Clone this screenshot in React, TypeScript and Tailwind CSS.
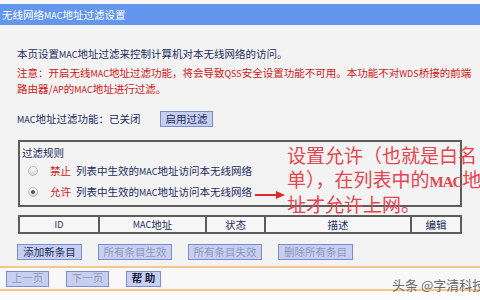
const cols = [
  { label: "ID", w: "w-[78px]" },
  { label: "MAC地址", w: "w-[107px]" },
  { label: "状态", w: "w-[59px]" },
  { label: "描述", w: "w-[146px]" },
  { label: "编辑", w: "flex-1" },
];

// latin letters in the old router page are narrow bitmap glyphs
function L({ children }: { children: React.ReactNode }) {
  return <span className="text-[9px]">{children}</span>;
}

function Btn({ children, off, w }: { children: React.ReactNode; off?: boolean; w: string }) {
  return (
    <div
      className={`${w} h-[16px] flex items-center justify-center bg-[#c7cff0] border border-[#7d8cc8] text-[10.5px] leading-none ${
        off ? "text-[#8f98bd]" : "text-[#1c2c60]"
      }`}
    >
      {children}
    </div>
  );
}

function Radio({ on }: { on?: boolean }) {
  return (
    <span className="w-[10px] h-[10px] rounded-full border border-[#b8b8b8] bg-gradient-to-b from-white to-[#d6d6d6] flex items-center justify-center">
      {on && <span className="w-[4px] h-[4px] rounded-full bg-[#555]" />}
    </span>
  );
}

export default function App() {
  return (
    <div className="relative w-[480px] h-[300px] overflow-hidden bg-[#f3f3f3] font-['Noto_Sans_CJK_SC',sans-serif]">
      <div className="h-[4px] bg-[#f7f7f7]" />
      <div className="h-[21px] bg-[#6496ee] text-white text-[10.5px] leading-[21px] pl-[2px]">
        无线网络<L>MAC</L>地址过滤设置
      </div>

      <div className="pl-[17px] pt-[21px] text-[10.5px] leading-[15px]">
        <p className="text-[#1c2c60]">
          本页设置<L>MAC</L>地址过滤来控制计算机对本无线网络的访问。
        </p>
        <p className="mt-[3px] text-[#d01818] whitespace-nowrap">
          注意：开启无线<L>MAC</L>地址过滤功能，将会导致<L>QSS</L>安全设置功能不可用。本功能不对<L>WDS</L>桥接的前端
          <br />
          路由器/<L>AP</L>的<L>MAC</L>地址进行过滤。
        </p>

        <div className="mt-[14px] flex items-center h-[16px] text-[#1c2c60]">
          <span className="w-[143px]">
            <L>MAC</L>地址过滤功能：已关闭
          </span>
          <Btn w="w-[53px]">启用过滤</Btn>
        </div>
      </div>

      <div className="ml-[18px] mt-[13px] w-[444px] border-2 border-[#5c5c5c] pt-[3px] pb-[3px] text-[10.5px]">
        <div className="pl-[2px] leading-[15px] text-[#1c2c60]">过滤规则</div>
        <div className="h-[21px] flex items-center pl-[8px]">
          <Radio />
          <span className="ml-[12px] text-[#d01818]">禁止</span>
          <span className="ml-[5px] text-[#1c2c60]">
            列表中生效的<L>MAC</L>地址访问本无线网络
          </span>
        </div>
        <div className="h-[21px] flex items-center pl-[8px]">
          <Radio on />
          <span className="ml-[12px] text-[#d01818]">允许</span>
          <span className="ml-[5px] text-[#1c2c60]">
            列表中生效的<L>MAC</L>地址访问本无线网络
          </span>
        </div>
      </div>

      <div className="ml-[18px] mt-[8px] w-[444px] h-[19px] flex border-2 border-[#5c5c5c] bg-[#f7f7f7] text-[10.5px] text-[#1c2c60]">
        {cols.map((c, i) => (
          <div
            key={c.label}
            className={`${c.w} flex items-center justify-center ${i > 0 ? "border-l-2 border-[#5c5c5c]" : ""}`}
          >
            {c.label === "ID" ? <L>ID</L> : c.label === "MAC地址" ? <><L>MAC</L>地址</> : c.label}
          </div>
        ))}
      </div>

      <div className="ml-[17px] mt-[10px] flex gap-[16px]">
        <Btn w="w-[65px]">添加新条目</Btn>
        <Btn w="w-[74px]" off>所有条目生效</Btn>
        <Btn w="w-[74px]" off>所有条目失效</Btn>
        <Btn w="w-[75px]" off>删除所有条目</Btn>
      </div>

      <div className="mt-[6px] h-[25px] border-y-2 border-[#f4c68e] bg-[#f8f8f8] flex items-center pl-[6px] gap-[17px]">
        <Btn w="w-[43px]" off>上一页</Btn>
        <Btn w="w-[43px]" off>下一页</Btn>
        <div className="w-[35px] h-[16px] flex items-center justify-center bg-[#c7cff0] border border-[#7d8cc8] text-[10.5px] leading-none font-bold text-[#1a1a3a]">
          帮 助
        </div>
      </div>
      <div className="h-[20px] bg-[#fbfbfb]" />

      {/* annotation overlay */}
      <div className="absolute left-[287px] top-[145px] w-[200px] text-[19px] leading-[23.5px] text-[#e4464f] font-['Liberation_Serif','Noto_Sans_CJK_SC',serif] whitespace-nowrap">
        设置允许（也就是白名
        <br />
        单），在列表中的<span className="text-[15px] font-bold tracking-[-1px]">MAC</span>地
        <br />
        址才允许上网。
      </div>
      <svg className="absolute left-[254px] top-[189px]" width="32" height="12" viewBox="0 0 32 12">
        <line x1="1" y1="6" x2="24" y2="6" stroke="#e02a2a" strokeWidth="2" />
        <polygon points="22,2 31,6 22,10" fill="#e02a2a" />
      </svg>

      <div className="absolute left-[392px] top-[277px] text-[13px] leading-[16px] text-[#6a6a6a] whitespace-nowrap">
        头条 @字清科技
      </div>
    </div>
  );
}
